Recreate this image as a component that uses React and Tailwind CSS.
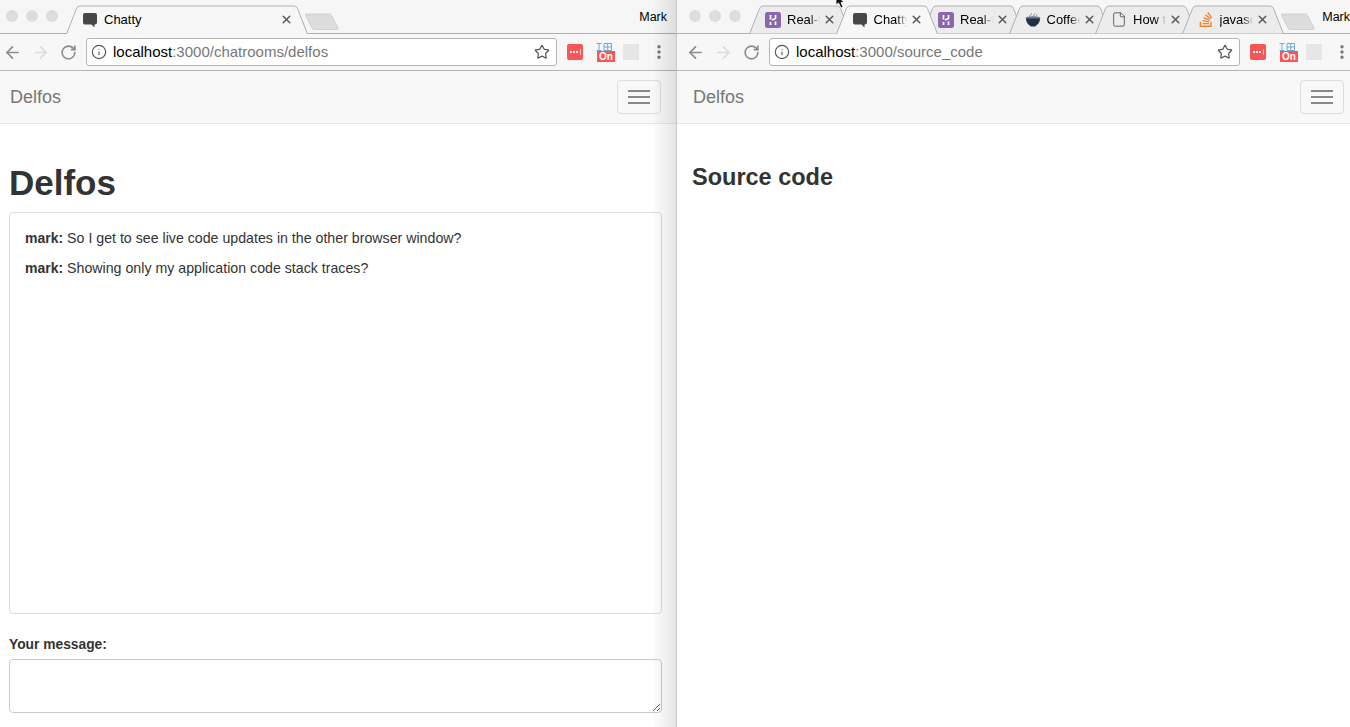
import React from 'react';
import { ArrowLeft, ArrowRight, RotateCw, Star, Info, X, EllipsisVertical, File } from 'lucide-react';
import { FaStackOverflow } from 'react-icons/fa';

const ChatIcon = () => (
    <svg width="16" height="16" viewBox="0 0 16 16">
        <path d="M3 1h10a2 2 0 0 1 2 2v7.500a2 2 0 0 1-2 2h-.5V15.500L9.500 12.500H3a2 2 0 0 1-2-2V3a2 2 0 0 1 2-2z" fill="#474747" />
    </svg>
);

const HerokuIcon = () => (
    <svg width="16" height="16" viewBox="0 0 16 16">
        <rect width="16" height="16" rx="2.500" fill="#8a66ad" />
        <path d="M5.500 3v4.500M5.500 10v3M10.500 3v3.500L7 8M10.500 9.500V13" stroke="#fff" strokeWidth="1.700" fill="none" />
    </svg>
);

const CoffeeIcon = () => (
    <svg width="16" height="16" viewBox="0 0 16 16">
        <path d="M4.500 4.500c0-1.500 2-1 2-3M8 4.500c0-1.500 2-1 2-3M11 4.500c0-1 1-1 1-2" stroke="#7b8794" strokeWidth="1" fill="none" />
        <ellipse cx="8" cy="6" rx="7.500" ry="1.800" fill="#6c7a89" />
        <path d="M1 6.500h14c0 4-2.500 6.500-4 7l-.5 1h-5l-.5-1c-1.500-.5-4-3-4-7z" fill="#22304a" />
    </svg>
);

const Favicon = ({ type }) => {
    if (type === 'chat') return <ChatIcon />;
    if (type === 'heroku') return <HerokuIcon />;
    if (type === 'coffee') return <CoffeeIcon />;
    if (type === 'doc') return <File size={17} strokeWidth={1.200} className="text-[#444]" />;
    return <FaStackOverflow size={17} className="text-[#f48024]" />;
};

const Tab = ({ width, icon, title, active, fade }) => {
    // tab outline, closed along the bottom when it is not the selected one
    const d = `M0.500 29L10.500 3.500Q11.500 1 14 1H${width - 14}Q${width - 11.500} 1 ${width - 10.500} 3.500L${width - 0.5} 29${active ? '' : 'Z'}`;
    return (
        <div className={`relative h-[29px] -mb-px shrink-0 ${active ? 'z-20' : 'z-10'} -ml-[15.500px] first:ml-0`} style={{ width }}>
            <svg className="absolute inset-0" width={width} height="29">
                <path d={d} fill={active ? '#f7f7f7' : '#ececec'} stroke="#b0b0b0" strokeWidth="1" />
            </svg>
            <div className="relative flex h-full items-center pr-[15px] pl-4">
                <span className="flex w-4 shrink-0 justify-center"><Favicon type={icon} /></span>
                <span className={`ml-[6px] min-w-0 flex-1 overflow-hidden whitespace-nowrap text-[13px] text-black ${fade ? 'mr-[3px] [mask-image:linear-gradient(to_right,black_70%,transparent_100%)]' : ''}`}>{title}</span>
                <X size={13} strokeWidth={3} className="shrink-0 text-[#5f5f5f]" />
            </div>
        </div>
    );
};

const NewTabButton = () => (
    <svg width="34" height="17" viewBox="0 0 34 17" className="relative z-0 -ml-[3px] mb-[3px] shrink-0">
        <path d="M1 1h23c1.500 0 2 .5 2.500 1.500L33 15c.3 1-.2 1.500-1 1.500H9c-1 0-1.500-.5-2-1.500L.5 2C.2 1.500.3 1 1 1z" fill="#dcdcdc" stroke="#d0d0d0" />
    </svg>
);

const Extensions = () => (
    <div className="flex items-center">
        <div className="ml-[10px] flex h-4 w-4 items-center justify-center gap-[1px] rounded-[2px] bg-[#fa5555]">
            <span className="h-[2px] w-[2px] bg-white" />
            <span className="h-[2px] w-[2px] bg-white" />
            <span className="h-[2px] w-[2px] bg-white" />
            <span className="ml-[1px] h-[6px] w-[1px] bg-white/70" />
        </div>
        <div className="relative ml-[13px] h-[19px] w-[19px]">
            <svg width="16" height="9" viewBox="0 0 16 9" className="absolute top-0 left-0">
                <path d="M0.500 0.500h5M3 0.500v7M0.500 7.500h5M8 0.500h7.500v7H8zM8 4h7.500M11.700 0.500v7" stroke="#6fa8d6" strokeWidth="1" fill="none" />
            </svg>
            <span className="absolute right-0 bottom-0 h-[11px] w-[18px] bg-[#fa5555] text-center text-[10px] leading-[11px] font-bold text-white">On</span>
        </div>
        <div className="ml-2 h-4 w-4 bg-[#e6e6e6]" />
        <EllipsisVertical size={18} strokeWidth={2.500} className="ml-[11px] text-[#777]" />
    </div>
);

const BrowserChrome = ({ tabs, host, path }) => (
    <>
        <div className="relative flex h-[34px] items-end border-b border-[#b0b0b0] bg-[#f6f6f6]">
            <div className="mb-[11px] ml-3 flex gap-2 self-end">
                <span className="h-3 w-3 rounded-full bg-[#dddddd]" />
                <span className="h-3 w-3 rounded-full bg-[#dddddd]" />
                <span className="h-3 w-3 rounded-full bg-[#dddddd]" />
            </div>
            <div className="ml-2 flex items-end">
                {tabs.map((t, i) => <Tab key={i} {...t} />)}
            </div>
            <NewTabButton />
            <span className="mr-[10px] mb-[6px] ml-auto text-[12.500px] leading-5 text-black">Mark</span>
        </div>
        <div className="flex h-[37px] items-center border-b border-[#b5b5b5] bg-[#f7f7f7] pl-1">
            <span className="flex w-7 justify-center"><ArrowLeft size={19} strokeWidth={2.200} className="text-[#8c8c8c]" /></span>
            <span className="flex w-7 justify-center"><ArrowRight size={19} strokeWidth={2.200} className="text-[#dddddd]" /></span>
            <span className="flex w-7 justify-center"><RotateCw size={17} strokeWidth={2.300} className="text-[#8c8c8c]" /></span>
            <div className="ml-1 flex h-[28px] w-[471px] items-center rounded-[3px] border border-[#b5b5b5] bg-white pr-[6px] pl-1">
                <Info size={16} strokeWidth={1.700} className="text-[#555]" />
                <span className="ml-[6px] text-[15px] text-black">{host}<span className="text-[#777]">{path}</span></span>
                <Star size={16} strokeWidth={1.800} className="ml-auto text-[#555]" />
            </div>
            <Extensions />
        </div>
    </>
);

const Navbar = () => (
    <div className="flex h-[53px] items-center justify-between border-b border-[#e7e7e7] bg-[#f8f8f8] px-4">
        <span className="text-lg text-[#777]">Delfos</span>
        <button className="flex h-[34px] w-[44px] flex-col items-center justify-center gap-1 rounded border border-[#dddddd]">
            <span className="h-[2px] w-[22px] bg-[#888]" />
            <span className="h-[2px] w-[22px] bg-[#888]" />
            <span className="h-[2px] w-[22px] bg-[#888]" />
        </button>
    </div>
);

const leftTabs = [{ width: 242, icon: 'chat', title: 'Chatty', active: true }];

const rightTabs = [
    { width: 102, icon: 'heroku', title: 'Real-time', fade: true },
    { width: 102, icon: 'chat', title: 'Chatty', active: true, fade: true },
    { width: 102, icon: 'heroku', title: 'Real-time', fade: true },
    { width: 102, icon: 'coffee', title: 'CoffeeScript', fade: true },
    { width: 102, icon: 'doc', title: 'How to', fade: true },
    { width: 102, icon: 'so', title: 'javascript', fade: true },
];

export default function App() {
    return (
        <div className="relative flex h-[727px] w-[1350px] overflow-hidden bg-white font-['Liberation_Sans',Arial,sans-serif] text-[#333]">
            {/* Left window, its left edge runs off the screen */}
            <div className="relative -ml-[6px] h-full w-[683px] shrink-0 bg-white">
                <BrowserChrome tabs={leftTabs} host="localhost" path=":3000/chatrooms/delfos" />
                <Navbar />
                <div className="px-[15px] pt-[39px]">
                    <h1 className="text-[35px] leading-10 font-bold text-[#333]">Delfos</h1>
                    <div className="mt-[9px] h-[402px] rounded border border-[#dddddd] p-[15px] text-[14.200px] leading-5">
                        <p className="mb-[10px]"><b className="text-sm">mark:</b> So I get to see live code updates in the other browser window?</p>
                        <p className="mb-[10px]"><b className="text-sm">mark:</b> Showing only my application code stack traces?</p>
                    </div>
                    <label className="mt-[21px] block text-[13.800px] leading-5 font-bold">Your message:</label>
                    <textarea className="mt-1 block h-[54px] w-full rounded border border-[#cccccc] bg-white" />
                </div>
                <div className="pointer-events-none absolute top-0 right-0 z-30 h-full w-[26px] border-r border-[#c8c8c8] bg-gradient-to-r from-transparent to-black/10" />
            </div>

            {/* Right window, cut off by the edge of the screen */}
            <div className="h-full w-[683px] shrink-0 bg-white">
                <BrowserChrome tabs={rightTabs} host="localhost" path=":3000/source_code" />
                <Navbar />
                <div className="px-[15px] pt-10">
                    <h3 className="text-[23.500px] leading-[26px] font-bold text-[#333]">Source code</h3>
                </div>
            </div>

            {/* Mouse pointer */}
            <svg width="12" height="10" viewBox="0 0 12 10" className="absolute top-0 left-[835px] z-40">
                <path d="M1 -6L1 5L3.500 3L6 8L8 7L6 2.500H9z" fill="#111" stroke="#fff" strokeWidth="0.800" />
            </svg>
        </div>
    );
}
